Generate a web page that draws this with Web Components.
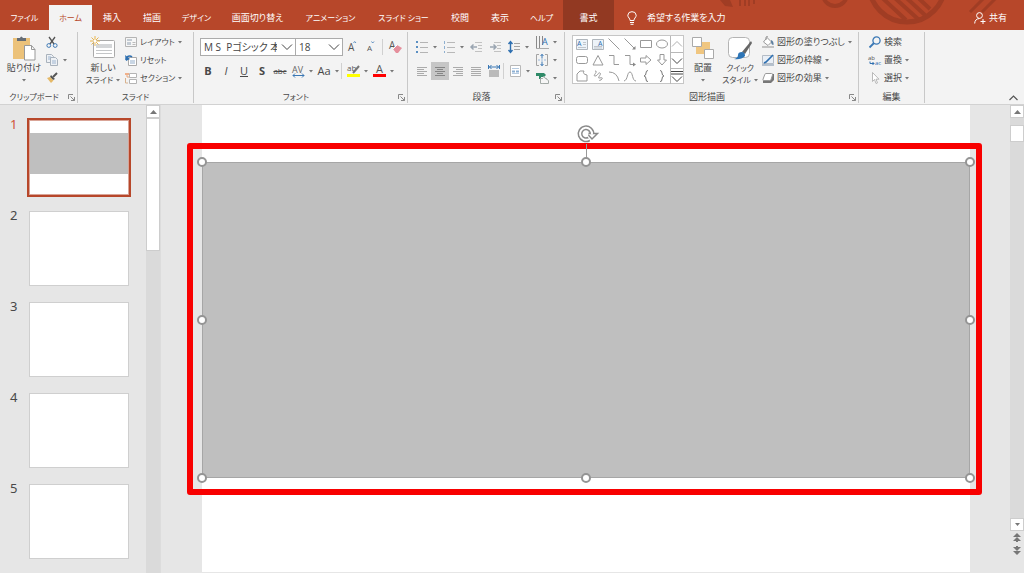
<!DOCTYPE html>
<html lang="ja">
<head>
<meta charset="utf-8">
<meta name="viewport" content="width=device-width, initial-scale=1">
<title>プレゼンテーション</title>
<style>
  body {
    margin: 0;
    font-family: "Noto Sans CJK JP", sans-serif;
    font-size: 9px;
    line-height: 12px;
    font-feature-settings: "palt";
    color: #484848;
    background: #e6e6e6;
  }
</style>
</head>
<body>
<slide-app></slide-app>

<script>
const g = 'fill="none" stroke="#999"';
const lines = (...rows) => `<g stroke="#ababab">${rows.map((r, i) => `<path d="M${r[0]} ${i * 2 + 1.5}H${r[1]}"/>`).join('')}</g>`;

/* name: [width, height, markup] */
const ICONS = {
  paste: [24, 26, '<path d="M1 3h17v21H1z" fill="#ecc27a"/><path d="M5 6V3h3q1-3 3 0h3v3z" fill="#666d75"/><path d="M12.500 10.500h7l3.500 4V25H12.500z" fill="#fff" stroke="#999"/><path d="M19.500 10.500v4H23" fill="none" stroke="#999"/>'],
  cut: [12, 12, '<path d="M3 1l5 7M9 1L4 8" stroke="#555" stroke-width="1.300" fill="none"/><circle cx="2.800" cy="9.500" r="1.900" fill="none" stroke="#3b78b5"/><circle cx="9.200" cy="9.500" r="1.900" fill="none" stroke="#3b78b5"/>'],
  copy: [12, 12, '<path d="M.5.5h5l2 2v6h-7z" fill="#eef1f5" stroke="#a9b2bc"/><path d="M4.500 3.500h5l2 2v6h-7z" fill="#eef1f5" stroke="#a9b2bc"/><path d="M6 7h4M6 9h4M2 3h3M2 5h2" stroke="#9db4cf"/>'],
  brush: [12, 12, '<path d="M11 1L7 5" stroke="#555" stroke-width="2"/><path d="M5 3l4 4-2 1-3-3z" fill="#555"/><path d="M1 6l3-1 3.500 3.500L5 11z" fill="#e5b968"/>'],
  newslide: [26, 24, '<rect x="3.500" y="4.500" width="21" height="17" rx="1" fill="#fff" stroke="#aaa"/><path d="M6 8h16v4H6z" fill="#d4d6d8"/><path d="M6 14.500h16M6 17.500h16" stroke="#c4c6c8"/><path d="M5 0v10M0 5h10M1.500 1.500l7 7M8.500 1.500l-7 7" stroke="#e8b54e"/><circle cx="5" cy="5" r="1.500" fill="#fff"/>'],
  layout: [12, 12, '<path d="M.5 1.500h11v9H.5z" fill="#f6f6f6" stroke="#b4b4b4"/><path d="M2 3h5v2H2zM2 6h4v3H2z" fill="#c3cbd3"/><path d="M7.500 6.500h3M7.500 8.500h3" stroke="#bbb"/>'],
  reset: [12, 12, '<path d="M3.500 3.500h8v8h-8z" fill="#fff" stroke="#aaa"/><path d="M5 6h5v4H5z" fill="#c9d6e4"/><path d="M1 6c0-4 4-5 6-3" fill="none" stroke="#2e6fb0" stroke-width="1.500"/><path d="M0 1l1 6 4-2z" fill="#2e6fb0"/>'],
  section: [12, 12, '<path d="M0 1h4v2H0z" fill="#f0b08a"/><path d="M2 5h4M2 5V3" stroke="#e9a77d"/><path d="M4.500 1.500h7v4h-7zM4.500 7.500h7v4h-7z" fill="#fff" stroke="#b4b4b4"/><path d="M.5 6v5H3" fill="none" stroke="#d7b28f"/>'],
  eraser: [13, 14, '<text x="0" y="9" font-size="10" fill="#555">A</text><path d="M4 9l4-4 5 3-4 5H7z" fill="#e58f9c"/><path d="M4 9l4-4" stroke="#fff"/>'],
  grow: [10, 12, '<text x="1" y="10" font-size="10" fill="#555">A</text><path d="M6.500 2l1.200-1.500L9 2" fill="none" stroke="#3b78b5" stroke-width=".8"/>'],
  shrink: [10, 12, '<text x="2" y="10" font-size="8" fill="#555">A</text><path d="M6.500.5L7.700 2 9 .5" fill="none" stroke="#3b78b5" stroke-width=".8"/>'],
  spacing: [13, 13, '<text x="0" y="8" font-size="9" fill="#666">AV</text><path d="M1 10.500h11M3 8.500l-2 2 2 2M10 8.500l2 2-2 2" fill="none" stroke="#3b78b5"/>'],
  highlight: [13, 14, '<text x="0" y="7" font-size="8" fill="#555">ab</text><path d="M12 2L6 9" stroke="#777" stroke-width="2"/><path d="M0 10h13v3H0z" fill="#ff0"/>'],
  fontcolor: [13, 14, '<text x="3" y="9" font-size="11" fill="#555">A</text><path d="M0 10h13v3H0z" fill="#f00"/>'],
  bullets: [12, 12, '<path d="M4 1.500h8M4 6.500h8M4 11.500h8" stroke="#b4b4b4"/><path d="M0 0h2v2H0zM0 5h2v2H0zM0 10h2v2H0z" fill="#5b8fc2"/>'],
  numbers: [12, 12, '<path d="M4 1.500h8M4 6.500h8M4 11.500h8" stroke="#b8b8b8"/><path d="M1.500 0v3M1.500 5v3M1.500 10v2" stroke="#8fb0d0"/>'],
  outdent: [11, 10, '<path d="M4 .5h7M7 3.500h4M7 6.500h4M4 9.500h7" stroke="#c2c2c2"/><path d="M0 5h6M2.500 2.500L0 5l2.500 2.500" fill="none" stroke="#9aa5b1" stroke-width="1.500"/>'],
  indent: [11, 10, '<path d="M4 .5h7M7 3.500h4M7 6.500h4M4 9.500h7" stroke="#c2c2c2"/><path d="M0 5h6M3.500 2.500L6 5 3.500 7.500" fill="none" stroke="#9aa5b1" stroke-width="1.500"/>'],
  linespace: [12, 12, '<path d="M2.500 1v10M.5 3l2-2.500 2 2.500M.5 9l2 2.500 2-2.500" fill="none" stroke="#2e6fb0" stroke-width="1.400"/><path d="M6 2.500h6M6 5.500h6M6 8.500h6" stroke="#a4a4a4"/>'],
  left: [10, 10, lines([0, 10], [0, 7], [0, 10], [0, 7], [0, 10])],
  center: [10, 10, '<g stroke="#858585"><path d="M0 1.500h10M2 3.500h6M0 5.500h10M2 7.500h6M0 9.500h10"/></g>'],
  right: [10, 10, lines([0, 10], [3, 10], [0, 10], [3, 10], [0, 10])],
  justify: [10, 10, lines([0, 10], [0, 10], [0, 10], [0, 10], [0, 10])],
  distribute: [12, 12, '<path d="M.5 0v4M11.500 0v4M1 2h10M3.500 0L1.500 2l2 2M8.500 0l2 2-2 2" fill="none" stroke="#3b78b5"/><path d="M1 5h10v7H1z" fill="#bababa"/>'],
  columns: [11, 12, '<path d="M.5.5h10v11H.5z" fill="#fff" stroke="#b8b8b8"/><path d="M2 3.500h7M2 8.500h7" stroke="#b5cae0"/><path d="M2 5.500h3v2H2zM6 5.500h3v2H6z" fill="#8db0d3"/>'],
  vertical: [13, 13, '<path d="M.5 0v12M3.500 0v12M6.500 0v9" stroke="#8a8a8a"/><text x="6" y="9" font-size="9" fill="#2e6fb0">A</text><path d="M0 12.500h13" stroke="#aaa"/>'],
  valign: [12, 12, '<path d="M3 .5H.5v11H3M9 .5h2.500v11H9" fill="none" stroke="#a4a4a4"/><path d="M6 0v4.500M6 7.500V12M4.500 2L6 .5 7.500 2M4.500 10L6 11.500 7.500 10" fill="none" stroke="#3b78b5"/><path d="M2 6h8" stroke="#9bbadb" stroke-dasharray="2 1"/>'],
  smartart: [13, 12, '<path d="M0 1h8l2 2-2 2H5v2H3V4H0z" fill="#2f8a68"/><path d="M4.500 6.500h6v5h-6z" fill="#f6f6f6" stroke="#a3aaa7"/><path d="M7 4.500l5.500 4v3h-6" fill="#f6f6f6" stroke="#a3aaa7"/>'],
  textbox: [12, 11, '<path d="M.5.5h11v10H.5z" fill="#edf3f9" stroke="#b0b6bc"/><text x="1" y="7" font-size="7" fill="#2e6fb0">A</text><path d="M7 3.500h3M7 5.500h3M2 8.500h8" stroke="#c0c6cc"/>'],
  vtextbox: [12, 11, '<path d="M.5.5h11v10H.5z" fill="#edf3f9" stroke="#b0b6bc"/><text x="6" y="7" font-size="7" fill="#2e6fb0">A</text><path d="M2 7.500h8M2 9h8" stroke="#c0c6cc"/>'],
  line: [12, 12, `<path d="M.5.5l11 11" ${g}/>`],
  arrow: [12, 12, `<path d="M.5.5l10 10" ${g}/><path d="M11.500 11.500V8l-3.500 3.500z" fill="#888"/>`],
  rect: [12, 12, `<path d="M.5 2.500h11v7H.5z" ${g}/>`],
  oval: [12, 12, `<ellipse cx="6" cy="6" rx="5.500" ry="4" ${g}/>`],
  rrect: [12, 12, `<rect x=".5" y="2.500" width="11" height="7" rx="2" ${g}/>`],
  triangle: [12, 12, `<path d="M6 1.500l5 9.500H1z" ${g}/>`],
  elbow: [12, 12, `<path d="M1 1.500h5v9h5" ${g}/>`],
  elbowarrow: [12, 12, `<path d="M1 1.500h5v9h4" ${g}/><path d="M9 8.500l3 2-3 2z" fill="#888"/>`],
  rarrow: [12, 12, `<path d="M.5 4h5.500V1.500L11 6l-5 4.500V8H.5z" ${g}/>`],
  darrow: [12, 12, `<path d="M4 .5v5.500H1.500L6 11l4.500-5H8V.5z" ${g}/>`],
  freeform: [12, 12, `<path d="M1 4l3-3h4q-2 3 3 4v6H1z" ${g}/>`],
  scribble: [12, 12, `<path d="M3 1C7 1 0 6 3 6s3-4 5-3-3 5-1 5 4-1 3 1-3 0-2 2" ${g}/>`],
  arc: [12, 12, `<path d="M1 2q8 0 10 9" ${g}/>`],
  curve: [12, 12, `<path d="M0 11C4 10 3 2 6 2s2 9 6 9" ${g}/>`],
  lbrace: [12, 12, '<path d="M8 .5Q6 .5 6 3T4 6q2 0 2 3T8 11.500" fill="none" stroke="#777"/>'],
  rbrace: [12, 12, '<path d="M4 .5Q6 .5 6 3T8 6Q6 6 6 9T4 11.500" fill="none" stroke="#777"/>'],
  up: [12, 8, '<path d="M1 6.500l5-5 5 5" fill="none" stroke="#b0b0b0"/>'],
  down: [12, 8, '<path d="M1 1.500l5 5 5-5" fill="none" stroke="#444"/>'],
  more: [12, 13, '<path d="M0 1.500h12M0 4h12M1 6.500l5 5 5-5" fill="none" stroke="#444"/>'],
  arrange: [22, 24, '<path d="M4 6h14v12H4z" fill="#f0c680"/><path d="M.5 1.500h9v9h-9zM12.500 13.500h9v9h-9z" fill="#fff" stroke="#aaa"/>'],
  quick: [24, 26, '<rect x=".5" y="2.500" width="21" height="20" rx="4" fill="#fff" stroke="#b4b4b4"/><path d="M23 6l1 2-7 11-3-2z" fill="#666"/><path d="M14 17q3 0 3 4-4 4-11 3 4-1 4-4t4-3z" fill="#2e75b6"/>'],
  fill: [12, 12, '<path d="M5 1.500L9.500 6 6 9.500 1.500 6z" fill="#fff" stroke="#999"/><path d="M4 4V1q1-1 2 0" fill="none" stroke="#999"/><path d="M9 4q3 1 2.500 5Q9 9 9 5" fill="#5d7f9f"/><path d="M0 10h12v2H0z" fill="#c2c2c2"/>'],
  outline: [12, 12, '<path d="M.5 1.500h11v8H.5z" fill="#e9eff6" stroke="#b4bcc6"/><path d="M11 1L4 8l-2 1" stroke="#2e6fb0" stroke-width="1.600" fill="none"/><path d="M0 10h12v2H0z" fill="#b4c0cd"/>'],
  effect: [12, 12, '<path d="M4 2h8v6l-3 3H1V9z" fill="#777"/><path d="M4 1.500h5.500q1.500 0 1 1.500L9 7.500q-.5 1-1.500 1H1.800q-1.300 0-.8-1.200L2.800 2.500q.3-1 1.200-1z" fill="#fff" stroke="#999"/>'],
  find: [12, 12, '<circle cx="7.500" cy="4.500" r="3.600" fill="none" stroke="#3b78b5" stroke-width="1.300"/><path d="M5 7l-4.500 4.500" stroke="#3b78b5" stroke-width="1.800"/>'],
  replace: [12, 12, '<text x="-1" y="6" font-size="6" fill="#555">ab</text><text x="6" y="11" font-size="6" fill="#2e6fb0">ac</text><path d="M1 7.500v2h4M3.500 8L5 9.500 3.500 11" fill="none" stroke="#2e6fb0"/>'],
  select: [12, 12, '<path d="M3.500.5v9l2-2 1.500 4 1.500-.6L7 7.200h3z" fill="#fff" stroke="#aaa" stroke-width=".8"/>'],
  launcher: [7, 7, '<path d="M.5 5V.5H5M2.500 2.500l4 4M6.500 3v3.500H3" fill="none" stroke="#888"/>'],
  collapse: [9, 6, '<path d="M.5 5l4-4 4 4" fill="none" stroke="#555" stroke-width="1.200"/>'],
  bulb: [10, 14, '<path d="M3 9.500Q3 8 2 7 .8 5.500.8 4.200A4 4 0 0 1 5 .7a4 4 0 0 1 4.200 3.500Q9.200 5.500 8 7 7 8 7 9.500zM3 11.500h4M3.500 13.300h3" fill="none" stroke="#fff"/>'],
  share: [12, 12, '<circle cx="5.500" cy="3.500" r="2.900" fill="none" stroke="#fff"/><path d="M.7 11.500q0-4.500 4.800-5M9 7v5M6.500 9.500h5" fill="none" stroke="#fff"/>'],
  scrollup: [7, 4, '<path d="M0 4L3.500 0 7 4z" fill="#777"/>'],
  scrolldown: [7, 4, '<path d="M1 0l2.500 3L6 0z" fill="#777"/>'],
  prev: [8, 9, '<path d="M0 4l4-4 4 4zM0 8l4-4 4 4z" fill="#777"/><path d="M3 7h2v2H3z" fill="#777"/>'],
  next: [8, 9, '<path d="M0 5l4 4 4-4zM0 1l4 4 4-4z" fill="#777"/><path d="M3 0h2v2H3z" fill="#777"/>'],
  caret: [4, 3, '<path d="M0 0h4L2 2.500z" fill="#777"/>'],
  rotate: [22, 18, '<path d="M12 14A6 6 0 1 1 15 9" fill="none" stroke="#8a8a8a" stroke-width="5"/><path d="M10 8.500h10.500L15 14z" fill="#fff" stroke="#8a8a8a" stroke-width="1.500"/><path d="M12 14A6 6 0 1 1 15 9.500" fill="none" stroke="#fff" stroke-width="2"/><circle cx="9" cy="9" r="2.500" fill="#fff"/>']
};

function define(name, html, setup) {
  const template = document.createElement('template');
  template.innerHTML = html;
  customElements.define(name, class extends HTMLElement {
    connectedCallback() {
      if (this.shadowRoot) return;
      const root = this.attachShadow({ mode: 'open' });
      root.append(template.content.cloneNode(true));
      if (setup) setup(this, root);
    }
  });
}

define('app-icon', `<style>
  :host { display: inline-flex; flex: none; }
  svg { display: block; overflow: visible; font-family: "Open Sans", sans-serif; }
</style>`, (el, root) => {
  const [w, h, body] = ICONS[el.getAttribute('name')];
  root.innerHTML += `<svg width="${w}" height="${h}" viewBox="0 0 ${w} ${h}" aria-hidden="true">${body}</svg>`;
});

/* Square icon button, optionally followed by a drop-down caret. */
define('tool-button', `<style>
  :host { display: flex; flex: none; height: 18px; }
  button { display: flex; align-items: center; border: 0; padding: 0; background: none; color: inherit; font: inherit; font-feature-settings: inherit; }
  .face { display: flex; width: 18px; height: 18px; align-items: center; justify-content: center; }
  :host([active]) .face { background: #c6c6c6; }
  .caret { display: flex; width: 8px; justify-content: center; }
</style><button type="button"><span class="face"><slot></slot></span></button>`, (el, root) => {
  const button = root.querySelector('button');
  if (el.hasAttribute('label')) button.setAttribute('aria-label', el.getAttribute('label'));
  if (el.hasAttribute('icon')) root.querySelector('.face').innerHTML = `<app-icon name="${el.getAttribute('icon')}"></app-icon>`;
  if (el.hasAttribute('caret')) button.insertAdjacentHTML('beforeend', '<span class="caret"><app-icon name="caret"></app-icon></span>');
});

/* Small icon with a text to its right. */
define('label-button', `<style>
  :host { display: flex; height: 18px; }
  button { display: flex; align-items: center; gap: 3px; border: 0; padding: 0; background: none; color: inherit; font: inherit; font-feature-settings: inherit; white-space: nowrap; }
</style><button type="button"><slot></slot></button>`, (el, root) => {
  const button = root.querySelector('button');
  button.insertAdjacentHTML('afterbegin', `<app-icon name="${el.getAttribute('icon')}"></app-icon>`);
  if (el.hasAttribute('caret')) button.insertAdjacentHTML('beforeend', '<app-icon name="caret"></app-icon>');
});

/* Large icon over one or two lines of text. */
define('big-button', `<style>
  :host { display: flex; flex: none; }
  button { display: flex; flex-direction: column; align-items: center; width: 100%; border: 0; padding: 2px 0 0; background: none; color: inherit; font: inherit; font-feature-settings: inherit; white-space: nowrap; }
  .pic { display: flex; height: 28px; align-items: center; }
  .second { display: flex; height: 12px; align-items: center; gap: 3px; }
</style><button type="button"><span class="pic"></span><slot></slot><span class="second"><slot name="second"></slot><app-icon name="caret"></app-icon></span></button>`, (el, root) => {
  root.querySelector('.pic').innerHTML = `<app-icon name="${el.getAttribute('icon')}"></app-icon>`;
});

define('combo-box', `<style>
  :host { display: grid; flex: none; height: 18px; }
  select { grid-area: 1 / 1; box-sizing: border-box; width: 100%; height: 18px; margin: 0; padding: 0 18px 0 3px; border: 1px solid #ababab; border-radius: 0; appearance: none; background: #fff; color: #444; font: 10px/16px "Open Sans", "Noto Sans CJK JP", sans-serif; font-feature-settings: "palt"; overflow: hidden; }
  app-icon { grid-area: 1 / 1; justify-self: end; align-self: center; padding-right: 3px; pointer-events: none; }
</style><select></select><app-icon name="down"></app-icon>`, (el, root) => {
  const select = root.querySelector('select');
  select.setAttribute('aria-label', el.getAttribute('label'));
  select.append(new Option(el.getAttribute('value')));
});

define('ribbon-group', `<style>
  :host { display: flex; flex: none; box-sizing: border-box; flex-direction: column; padding: 2px 0 0; }
  .body { display: flex; height: 59px; border-right: 1px solid #c8c8c8; }
  footer { display: flex; height: 12px; align-items: center; border-right: 1px solid #c8c8c8; }
  .name { flex: 1; text-align: center; white-space: nowrap; }
  button { display: flex; border: 0; padding: 0 2px 0 0; background: none; }
</style><div class="body"><slot></slot></div><footer><span class="name"><slot name="name"></slot></span></footer>`, (el, root) => {
  if (el.hasAttribute('launcher')) root.querySelector('footer').insertAdjacentHTML('beforeend', '<button type="button" aria-label="詳細"><app-icon name="launcher"></app-icon></button>');
});

define('shape-gallery', `<style>
  :host { display: grid; grid-template-columns: 1fr 13px; box-sizing: border-box; width: 112px; height: 49px; border: 1px solid #c6c6c6; background: #fff; }
  .shapes { display: grid; grid-template-columns: repeat(6, 16px); grid-auto-rows: 16px; justify-content: center; align-content: center; }
  button { display: flex; align-items: center; justify-content: center; border: 0; padding: 0; background: none; }
  .scroll { display: grid; grid-template-rows: repeat(3, 1fr); border-left: 1px solid #b8b8b8; }
  .scroll button + button { border-top: 1px solid #b8b8b8; }
</style><div class="shapes"></div><div class="scroll"></div>`, (el, root) => {
  const make = n => `<button type="button" aria-label="${n}"><app-icon name="${n}"></app-icon></button>`;
  root.querySelector('.shapes').innerHTML = ['textbox', 'vtextbox', 'line', 'arrow', 'rect', 'oval', 'rrect', 'triangle', 'elbow', 'elbowarrow', 'rarrow', 'darrow', 'freeform', 'scribble', 'arc', 'curve', 'lbrace', 'rbrace'].map(make).join('');
  root.querySelector('.scroll').innerHTML = ['up', 'down', 'more'].map(make).join('');
});

define('ribbon-tabs', `<style>
  :host { display: block; position: relative; height: 30px; overflow: hidden; background: #b7472a; color: #fff; }
  .art { position: absolute; top: 0; right: 0; }
  .bar { position: relative; display: flex; height: 30px; padding-top: 5px; box-sizing: border-box; }
  nav { display: flex; }
  a { display: flex; align-items: center; justify-content: center; color: inherit; text-decoration: none; white-space: nowrap; }
  .kana { font-size: 8px; }
  .short { width: 40px; } .home { width: 43px; } .mid { width: 49px; } .long { width: 73px; }
  .on { background: #f3f3f3; color: #b7472a; }
  .context { width: 51px; margin-top: -5px; padding-top: 5px; background: #923922; }
  button { display: flex; align-items: center; gap: 10px; border: 0; padding: 0 0 0 13px; background: none; color: inherit; font: inherit; font-feature-settings: inherit; white-space: nowrap; }
  .share { margin-left: auto; gap: 3px; padding: 0 17px 0 0; }
</style>
<svg class="art" width="320" height="30" viewBox="0 0 320 30" aria-hidden="true">
  <g fill="none" stroke="#a03d24">
    <circle cx="203" cy="-16" r="38" stroke-width="5"/>
    <path d="M172-8l30 28M182-10l32 29M194-10l28 26M206-10l20 19" stroke-width="4"/>
    <circle cx="131" cy="-6" r="12" stroke-width="4"/>
    <path d="M266 12l16-16M278 12l20-20" stroke-width="3"/>
    <path d="M36 6V0M41 6V0M45 6V0M50 4V0" stroke-width="2"/>
  </g>
  <path d="M16 0h10l3 7-8-1z" fill="#a03d24"/>
</svg>
<div class="bar">
  <nav aria-label="リボン タブ">
    <a href="#file" class="mid kana">ファイル</a><a href="#home" class="home kana on">ホーム</a><a href="#insert" class="short">挿入</a><a href="#draw" class="short">描画</a><a href="#design" class="mid kana">デザイン</a><a href="#transitions" class="long">画面切り替え</a><a href="#animations" class="long kana">アニメーション</a><a href="#show" class="long kana">スライド ショー</a><a href="#review" class="short">校閲</a><a href="#view" class="short">表示</a><a href="#help" class="home kana">ヘルプ</a><a href="#format" class="context">書式</a>
  </nav>
  <button type="button"><app-icon name="bulb"></app-icon>希望する作業を入力</button>
  <button type="button" class="share"><app-icon name="share"></app-icon>共有</button>
</div>`);

define('ribbon-bar', `<style>
  :host { display: flex; height: 74px; background: #f3f3f3; border-bottom: 1px solid #d2d2d2; }
  .clip { width: 78px; } .slides { width: 116px; } .font { width: 214px; } .para { width: 157px; } .draw { width: 294px; } .edit { width: 66px; }
  .kana { font-size: 8px; }
  .stack { display: flex; flex-direction: column; padding-top: 1px; }
  .row { display: flex; }
  .two { display: flex; flex-direction: column; gap: 6px; padding-top: 6px; }
  .sep { width: 1px; height: 16px; margin: 1px 3px; background: #d0d0d0; }
  .clip .stack { padding-left: 1px; }
  .clip big-button { width: 36px; margin-left: 6px; }
  .slides big-button { width: 38px; margin: 0 3px 0 6px; }
  .font .two { padding-left: 5px; }
  .family { width: 96px; margin-left: 1px; } .size { width: 48px; margin-left: -1px; }
  .letters { font: 11px/18px "Open Sans", sans-serif; }
  .strike { font-size: 8px; text-decoration: line-through; }
  .para .two { padding-left: 5px; }
  .spaced { gap: 1px; }
  .tight { margin-left: 0; margin-right: 2px; }
  .para .stack { padding-left: 1px; }
  shape-gallery { margin: 3px 0 0 7px; }
  .arrange { width: 36px; margin-left: 1px; } .quick { width: 38px; }
  .draw .stack { padding-left: 3px; }
  .edit .stack { padding-left: 10px; }
  .fold { display: flex; margin: auto 6px 3px auto; border: 0; padding: 0; background: none; }
</style>
<ribbon-group class="clip" launcher>
  <big-button icon="paste">貼り付け</big-button>
  <div class="stack"><tool-button icon="cut" label="切り取り"></tool-button><tool-button icon="copy" label="コピー" caret></tool-button><tool-button icon="brush" label="書式のコピー"></tool-button></div>
  <span slot="name" class="kana">クリップボード</span>
</ribbon-group>
<ribbon-group class="slides">
  <big-button icon="newslide">新しい<span slot="second" class="kana">スライド</span></big-button>
  <div class="stack kana"><label-button icon="layout" caret>レイアウト</label-button><label-button icon="reset">リセット</label-button><label-button icon="section" caret>セクション</label-button></div>
  <span slot="name" class="kana">スライド</span>
</ribbon-group>
<ribbon-group class="font" launcher>
  <div class="two">
    <div class="row"><combo-box class="family" label="フォント" value="M S&nbsp; Pゴシック 本文"></combo-box><combo-box class="size" label="フォント サイズ" value="18"></combo-box><tool-button icon="grow" label="拡大"></tool-button><tool-button icon="shrink" label="縮小"></tool-button><span class="sep"></span><tool-button icon="eraser" label="書式のクリア"></tool-button></div>
    <div class="row letters"><tool-button><b>B</b></tool-button><tool-button><i>I</i></tool-button><tool-button><u>U</u></tool-button><tool-button><b>S</b></tool-button><tool-button><span class="strike">abc</span></tool-button><tool-button icon="spacing" label="文字の間隔" caret></tool-button><tool-button caret>Aa</tool-button><span class="sep tight"></span><tool-button icon="highlight" label="蛍光ペン" caret></tool-button><tool-button icon="fontcolor" label="フォントの色" caret></tool-button></div>
  </div>
  <span slot="name" class="kana">フォント</span>
</ribbon-group>
<ribbon-group class="para" launcher>
  <div class="two">
    <div class="row spaced"><tool-button icon="bullets" label="箇条書き" caret></tool-button><tool-button icon="numbers" label="段落番号" caret></tool-button><tool-button icon="outdent" label="インデント解除"></tool-button><tool-button icon="indent" label="インデント"></tool-button><tool-button icon="linespace" label="行間" caret></tool-button></div>
    <div class="row"><tool-button icon="left" label="左揃え"></tool-button><tool-button icon="center" label="中央揃え" active></tool-button><tool-button icon="right" label="右揃え"></tool-button><tool-button icon="justify" label="両端揃え"></tool-button><tool-button icon="distribute" label="均等割り付け"></tool-button><span class="sep tight"></span><tool-button icon="columns" label="段組み" caret></tool-button></div>
  </div>
  <div class="stack"><tool-button icon="vertical" label="文字列の方向" caret></tool-button><tool-button icon="valign" label="文字の配置" caret></tool-button><tool-button icon="smartart" label="SmartArt" caret></tool-button></div>
  <span slot="name">段落</span>
</ribbon-group>
<ribbon-group class="draw" launcher>
  <shape-gallery></shape-gallery>
  <big-button icon="arrange" class="arrange">配置</big-button>
  <big-button icon="quick" class="quick"><span class="kana">クイック</span><span slot="second" class="kana">スタイル</span></big-button>
  <div class="stack"><label-button icon="fill" caret>図形の塗りつぶし</label-button><label-button icon="outline" caret>図形の枠線</label-button><label-button icon="effect" caret>図形の効果</label-button></div>
  <span slot="name">図形描画</span>
</ribbon-group>
<ribbon-group class="edit">
  <div class="stack"><label-button icon="find">検索</label-button><label-button icon="replace" caret>置換</label-button><label-button icon="select" caret>選択</label-button></div>
  <span slot="name">編集</span>
</ribbon-group>
<button type="button" class="fold" aria-label="リボンを折りたたむ"><app-icon name="collapse"></app-icon></button>`);

define('slide-thumb', `<style>
  :host { display: grid; grid-template-columns: 29px 100px; height: 75px; font: 13px/8px "Noto Sans", sans-serif; }
  .number { padding-left: 10px; }
  .page { display: block; box-sizing: border-box; height: 75px; padding: 12px 0 0; border: 1px solid #cfcfcf; background: #fff; }
  .page::before { content: ""; display: block; height: 41px; }
  :host([current]) .number { color: #d0543a; }
  :host([current]) .page { border-color: #d9a497; outline: 2px solid #b7472a; }
  :host([current]) .page::before { background: #bfbfbf; }
</style><span class="number"><slot></slot></span><a class="page" href="#slide" aria-label="スライド"></a>`);

define('scroll-bar', `<style>
  :host { display: flex; flex: none; flex-direction: column; width: 14px; background: #dadada; }
  button { display: flex; align-items: center; justify-content: center; box-sizing: border-box; height: 13px; border: 1px solid #cdcdcd; padding: 0; background: #fff; }
  .track { flex: 1; }
  .thumb { box-sizing: border-box; height: var(--thumb, 132px); margin-top: var(--offset, 0); border: 1px solid #cdcdcd; background: #fff; }
  .plain { border: 0; background: #e6e6e6; }
  .end { height: 16px; }
</style><button type="button" aria-label="上へ"><app-icon name="scrollup"></app-icon></button><div class="track"><div class="thumb"></div></div>`, (el, root) => {
  if (el.hasAttribute('pager')) root.querySelector('.track').insertAdjacentHTML('afterend',
    '<button type="button" aria-label="下へ"><app-icon name="scrolldown"></app-icon></button><button type="button" class="plain" aria-label="前のスライド"><app-icon name="prev"></app-icon></button><button type="button" class="plain" aria-label="次のスライド"><app-icon name="next"></app-icon></button><div class="plain end"></div>');
});

/* Slide surface with one selected rectangle and the red annotation frame round it. */
define('slide-canvas', `<style>
  :host { display: block; position: relative; background: #fff; }
  .shape { position: absolute; top: 57px; left: 0; right: 0; aspect-ratio: 768 / 316; background: #bfbfbf; box-shadow: inset 0 0 0 1px #a6a6a6; }
  .frame { position: absolute; inset: -19px -12px -17px -15px; border: 6px solid #f80000; border-radius: 3px; }
  .stem { position: absolute; left: 50%; top: -18px; width: 1px; height: 18px; background: #999; }
  app-icon { position: absolute; left: 50%; top: -37px; margin-left: -9px; }
  i { position: absolute; width: 10px; height: 10px; box-sizing: border-box; margin: -5px; border: 2px solid #949494; border-radius: 50%; background: #fff; }
  .t { top: 0; } .m { top: 50%; } .b { top: 100%; } .l { left: 0; } .c { left: 50%; } .r { left: 100%; }
</style><div class="shape"><div class="frame"></div><div class="stem"></div><app-icon name="rotate"></app-icon>
<i class="t l"></i><i class="t c"></i><i class="t r"></i><i class="m l"></i><i class="m r"></i><i class="b l"></i><i class="b c"></i><i class="b r"></i></div>`);

define('slide-app', `<style>
  :host { display: flex; flex-direction: column; height: 100vh; overflow: hidden; }
  main { display: flex; flex: 1; min-height: 0; }
  .list { display: flex; flex: none; width: 146px; box-sizing: border-box; flex-direction: column; gap: 16px; padding-top: 15px; }
  .first { --thumb: 133px; border-right: 1px solid #dcdcdc; }
  .last { --thumb: 17px; --offset: 7px; }
  slide-canvas { flex: 1; margin: 0 40px 1px 41px; }
</style>
<ribbon-tabs></ribbon-tabs>
<ribbon-bar></ribbon-bar>
<main>
  <div class="list"><slide-thumb current>1</slide-thumb><slide-thumb>2</slide-thumb><slide-thumb>3</slide-thumb><slide-thumb>4</slide-thumb><slide-thumb>5</slide-thumb></div>
  <scroll-bar class="first"></scroll-bar>
  <slide-canvas></slide-canvas>
  <scroll-bar class="last" pager></scroll-bar>
</main>`);
</script>
</body>
</html>
